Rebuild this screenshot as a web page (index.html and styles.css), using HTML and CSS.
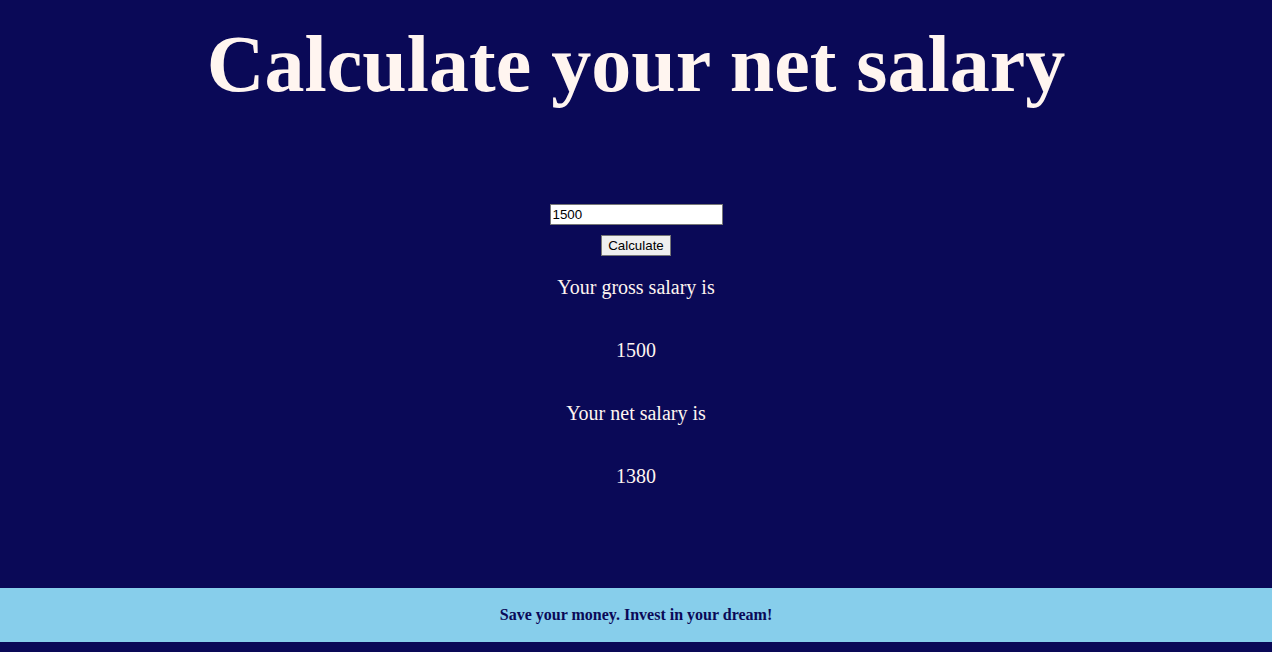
FILE: index.html
```html
<!DOCTYPE html>
<html>
<head>
<meta charset="utf-8">
<link rel="stylesheet" href="styles.css">
</head>
<body>
<div class="page">
  <h1 class="title">Calculate your net salary</h1>
  <main class="calc">
    <input class="amount" type="text" value="1500">
    <button class="calc-btn">Calculate</button>
    <p class="line">Your gross salary is</p>
    <p class="line">1500</p>
    <p class="line">Your net salary is</p>
    <p class="line">1380</p>
  </main>
  <footer class="footer">Save your money. Invest in your dream!</footer>
</div>
</body>
</html>
```
FILE: styles.css
```css
html, body {
  margin: 0;
  padding: 0;
  background: #0a0957;
}
.page {
  height: 652px;
  display: flex;
  flex-direction: column;
  font-family: "Liberation Serif", "Times New Roman", serif;
}
.title {
  margin: 18px 0 0;
  font-size: 80px;
  line-height: 92px;
  font-weight: bold;
  color: #fff5f0;
  text-align: center;
}
.calc {
  flex: 1;
  display: flex;
  flex-direction: column;
  align-items: center;
  padding-top: 94px;
}
.amount {
  width: 173px;
  height: 21px;
  box-sizing: border-box;
  font-family: "Liberation Sans", Arial, sans-serif;
  font-size: 13.33px;
  padding: 1px 2px;
  border: 1px solid #767676;
  background: #fff;
  color: #000;
  margin: 0;
}
.calc-btn {
  margin-top: 10px;
  height: 21px;
  box-sizing: border-box;
  font-family: "Liberation Sans", Arial, sans-serif;
  font-size: 13.33px;
  padding: 1px 6px;
  border: 1px solid #767676;
  background: #efefef;
  color: #000;
}
.line {
  margin: 20px 0 17px;
  font-size: 20px;
  line-height: 23px;
  color: #fff5f0;
}
.calc-btn + .line {
  margin-top: 20px;
}
.line + .line {
  margin-top: 23px;
}
.footer {
  margin-bottom: 10px;
  height: 54px;
  background: #87ceeb;
  color: #0a0957;
  font-weight: bold;
  font-size: 16px;
  display: flex;
  align-items: center;
  justify-content: center;
}
```
